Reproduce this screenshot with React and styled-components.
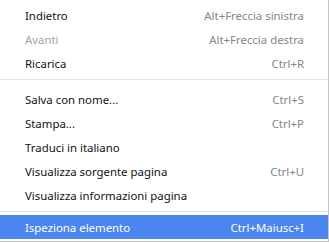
import { Fragment } from "react";
import styled, { createGlobalStyle } from "styled-components";

const GlobalStyle = createGlobalStyle`
	body {
		margin: 0;
		background: #fff;
	}
`;

const Menu = styled.ul`
	list-style: none;
	margin: 0;
	padding: 3px 0 2px;
	width: 328px;
	background: #fff;
	border-right: 1px solid #c4c4c4;
	border-bottom: 1px solid #c4c4c4;
	font-family: "Noto Sans", "Segoe UI", sans-serif;
	font-size: 11.4px;
`;

const Item = styled.li`
	display: flex;
	align-items: center;
	justify-content: space-between;
	height: 24px;
	padding: 0 24px 0 25px;
	color: ${(p) => (p.$active ? "#fff" : p.$disabled ? "#a3a3a3" : "#111")};
	background: ${(p) => (p.$active ? "#4b86f0" : "transparent")};
	white-space: nowrap;
`;

const Shortcut = styled.span`
	color: ${(p) => (p.$active ? "#fff" : "#868686")};
`;

const Separator = styled.li`
	height: 1px;
	margin: ${(p) => p.$gap};
	background: #e4e4e4;
`;

const groups = [
	[
		{ label: "Indietro", key: "Alt+Freccia sinistra" },
		{ label: "Avanti", key: "Alt+Freccia destra", disabled: true },
		{ label: "Ricarica", key: "Ctrl+R" },
	],
	[
		{ label: "Salva con nome...", key: "Ctrl+S" },
		{ label: "Stampa...", key: "Ctrl+P" },
		{ label: "Traduci in italiano" },
		{ label: "Visualizza sorgente pagina", key: "Ctrl+U" },
		{ label: "Visualizza informazioni pagina" },
	],
	[{ label: "Ispeziona elemento", key: "Ctrl+Maiusc+I", active: true }],
];

const gaps = ["4px 0 7px", "4px 0 3px"];

const App = () => {
	return (
		<>
			<GlobalStyle />
			<Menu>
				{groups.map((group, gi) => (
					<Fragment key={gi}>
						{group.map((item) => (
							<Item
								key={item.label}
								$disabled={item.disabled}
								$active={item.active}
							>
								<span>{item.label}</span>
								{item.key && (
									<Shortcut $active={item.active}>{item.key}</Shortcut>
								)}
							</Item>
						))}
						{gi < groups.length - 1 && <Separator $gap={gaps[gi]} />}
					</Fragment>
				))}
			</Menu>
		</>
	);
};

export default App;
